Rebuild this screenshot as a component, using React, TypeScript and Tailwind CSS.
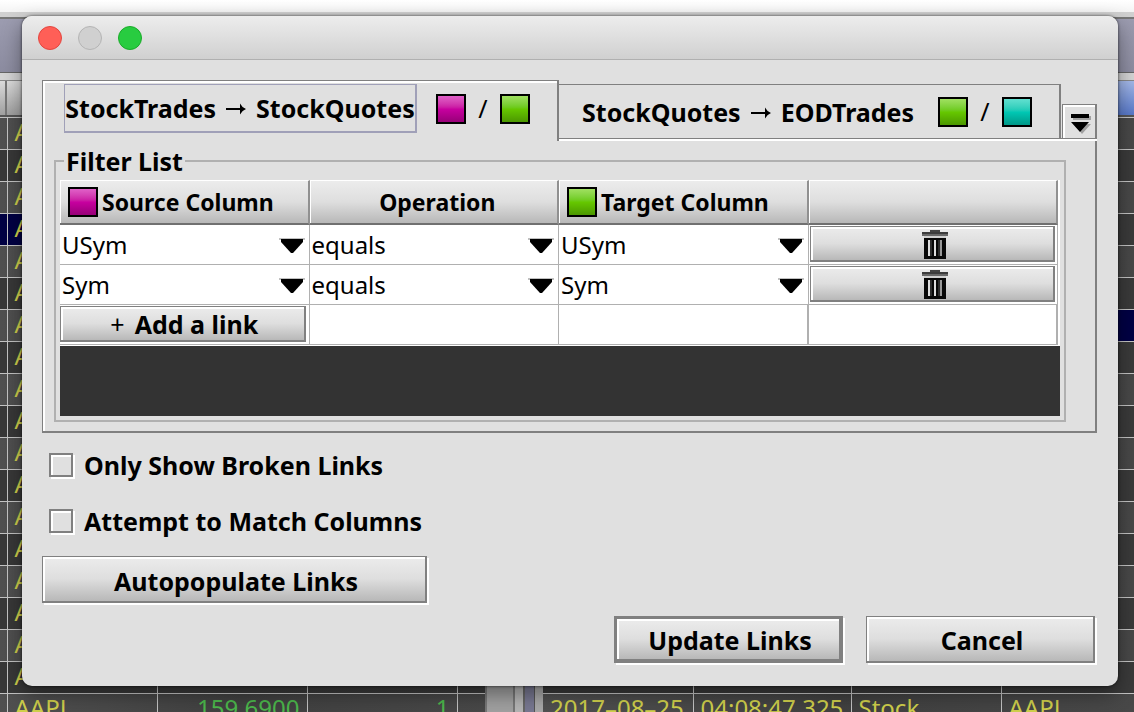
import { useState } from 'react';
import clsx from 'clsx';

const rows = Array.from({ length: 19 }, (_, index) => index);
const columns = ['USym', 'Sym'];

const raised =
  'border-t border-l border-r-2 border-b-2 border-[#808080] bg-linear-to-b from-[#ececec] via-[#dedede] to-[#b8b8b8] shadow-[inset_2px_2px_0_#fff,2px_2px_0_#fff] font-bold text-black';

const swatches = {
  magenta: 'from-[#e060c8] via-[#c800a0] to-[#980078]',
  green: 'from-[#a0e060] via-[#66c800] to-[#4c9800]',
  teal: 'from-[#60e0d0] via-[#00c8b4] to-[#009888]',
};

function Swatch({ color }: { color: keyof typeof swatches }) {
  return (
    <span
      className={clsx(
        'inline-block size-[30px] shrink-0 border-2 border-black bg-linear-to-b',
        swatches[color],
      )}
    />
  );
}

function Arrow() {
  return (
    <svg width="20" height="12" viewBox="0 0 20 12" className="shrink-0" aria-label="to">
      <path d="M0 6h16" stroke="#000" strokeWidth="2" />
      <path d="M14 0.5Q16 4.5 20 6Q16 7.5 14 11.5Z" />
    </svg>
  );
}

function TrashIcon() {
  return (
    <svg width="26" height="30" viewBox="0 0 26 30" shapeRendering="crispEdges">
      <path d="M8 0h10v2H8z" fill="#444" />
      <path d="M0 2h26v2H0z" fill="#3c3c3c" />
      <path d="M0 4h26v2H0z" fill="#686868" />
      <path d="M2 6h22v2H2z" fill="#d0d0d0" />
      <path d="M2 8h22v21H2z" fill="#080808" />
      <path d="M6 10h2v16H6zM12 10h2v16h-2z" fill="#ddd" />
      <path d="M18 10h2v16h-2z" fill="#999" />
      <path d="M8 10h2v16H8zM16 10h2v16h-2z" fill="#2c2c2c" />
    </svg>
  );
}

function CellSelect({
  label,
  value,
  options,
}: {
  label: string;
  value: string;
  options: string[];
}) {
  return (
    <div className="relative h-[39px]">
      <select
        aria-label={label}
        defaultValue={value}
        className="size-full appearance-none bg-white pl-[2px] text-[24px] leading-8 text-black"
      >
        {options.map((option) => (
          <option key={option}>{option}</option>
        ))}
      </select>
      <svg
        width="26"
        height="16"
        viewBox="0 0 26 16"
        className="pointer-events-none absolute top-[13px] right-1"
      >
        <path d="M0 0h26v2H0z" fill="#c0c0c0" />
        <path d="M2 1h22v3L14 15h-2L2 4z" />
      </svg>
    </div>
  );
}

function Check({ label }: { label: string }) {
  return (
    <label className="flex h-14 items-center gap-[11px] text-[25px] font-bold">
      <input
        type="checkbox"
        className="size-6 appearance-none border-2 border-[#808080] shadow-[inset_2px_2px_0_#fff,2px_2px_0_#fff] checked:bg-[#808080]"
      />
      <span className="pt-[2px]">{label}</span>
    </label>
  );
}

function Row({ index, cells, selected }: { index: number; cells: string[]; selected: number }) {
  return (
    <tr
      className={clsx(
        'h-8',
        index === selected
          ? 'bg-[#000044]'
          : index % 2
            ? 'bg-linear-to-r from-[#383838] to-[#3a3a3a]'
            : 'bg-linear-to-r from-[#505050] via-[#404040] to-[#484848]',
      )}
    >
      {cells.map((cell, i) => (
        <td
          key={i}
          className={clsx(
            'overflow-hidden border-t border-l border-[#c4c4c4] px-[7px] pt-0 pb-[3px] leading-7 whitespace-nowrap first:border-l-0',
            /^\d+(\.\d+)?$/.test(cell) ? 'text-right text-[#4cb84c]' : 'text-[#d0d04c]',
          )}
        >
          {cell}
        </td>
      ))}
    </tr>
  );
}

// Trade tables that show around the edges of the dialog
function Workspace() {
  return (
    <div className="absolute inset-0 flex flex-col overflow-hidden bg-[#404040] text-[24px]">
      <div className="h-3 shrink-0 bg-linear-to-b from-white to-[#f4f4f4]" />
      <div className="h-[7px] shrink-0 border-b-2 border-[#777] bg-[#d0d0d0]" />
      <div className="h-[54px] shrink-0 border-b border-[#666] bg-linear-to-b from-[#9c9cb0] to-[#8c8ca0]" />
      <div className="h-2 shrink-0 border-b border-[#888] bg-[#d4d4d4]" />
      <div className="flex h-9 shrink-0 border-b-2 border-[#555] bg-linear-to-b from-[#dcdcdc] to-[#a0a0a0]">
        <div className="w-[7px] border-r-2 border-[#777]" />
        <div className="ml-auto w-[133px] bg-linear-to-b from-[#a4b8e8] to-[#5878c8]" />
      </div>
      <div className="flex">
        <table className="w-[485px] shrink-0 table-fixed border-collapse">
          <colgroup>
            <col className="w-[7px]" />
            <col className="w-[150px]" />
            <col className="w-[150px]" />
            <col className="w-[150px]" />
            <col />
          </colgroup>
          <tbody>
            {rows.map((index) => (
              <Row
                key={index}
                index={index}
                selected={3}
                cells={index === 18 ? ['', 'AAPL', '159.6900', '1', ''] : ['', 'AAPL', '', '', '']}
              />
            ))}
          </tbody>
        </table>
        <div className="flex w-[58px] shrink-0">
          <div className="w-[30px] border-x-2 border-[#777] bg-[#a0a0a0]" />
          <div className="w-[10px] border-r-2 border-[#666] bg-[#b4b4b4]" />
          <div className="w-[10px] border-r border-[#555] bg-[#777790]" />
          <div className="w-2 bg-[#a8a8a8]" />
        </div>
        <table className="min-w-0 flex-1 table-fixed border-collapse">
          <colgroup>
            <col className="w-[150px]" />
            <col className="w-[158px]" />
            <col className="w-[150px]" />
            <col />
          </colgroup>
          <tbody>
            {rows.map((index) => (
              <Row
                key={index}
                index={index}
                selected={6}
                cells={
                  index === 18 ? ['2017–08–25', '04:08:47.325', 'Stock', 'AAPL'] : ['', '', '', '']
                }
              />
            ))}
          </tbody>
        </table>
      </div>
    </div>
  );
}

const headerCell =
  'h-[45px] border-t border-r-2 border-b-2 border-t-white border-r-[#909090] border-b-[#707070] bg-linear-to-b from-[#ececec] via-[#dedede] to-[#b8b8b8] p-0 text-[23px] leading-[30px] font-bold shadow-[inset_1px_0_0_#fff]';

export default function App() {
  const [links, setLinks] = useState(['USym', 'Sym']);

  return (
    <div className="relative min-h-screen font-['Noto_Sans','Open_Sans',sans-serif] text-black">
      <Workspace />
      <div className="relative pt-4 pr-4 pl-[22px]">
        <div
          role="dialog"
          aria-label="Links"
          className="overflow-hidden rounded-[10px] bg-[#e0e0e0] shadow-[0_0_3px_rgba(0,0,0,0.7),0_8px_20px_rgba(0,0,0,0.4)]"
        >
          <div className="flex h-11 items-center gap-4 border-b border-[#b0b0b0] bg-linear-to-b from-[#ededed] to-[#d0d0d0] px-4">
            <button aria-label="Close" className="size-6 rounded-full border border-[#e2463f] bg-[#ff5f57]" />
            <button aria-label="Minimize" className="size-6 rounded-full border border-[#b4b4b4] bg-[#d0d0d0]" />
            <button aria-label="Zoom" className="size-6 rounded-full border border-[#1aab29] bg-[#28cc40]" />
          </div>

          <div className="pt-5 pr-[21px] pb-[23px] pl-5">
            {/* Tabs */}
            <div className="flex items-end" role="tablist">
              <button
                role="tab"
                aria-selected="true"
                className="flex h-[61px] w-[517px] shrink-0 items-start border-t border-r-2 border-l border-[#808080] pt-[3px] pl-[21px] text-[25px] font-bold shadow-[inset_2px_2px_0_#fff]"
              >
                <span className="flex h-[49px] w-[353px] items-center justify-center gap-[10px] border-t border-r-2 border-b-2 border-l border-[#a0a0b8] pt-[2px]">
                  StockTrades <Arrow /> StockQuotes
                </span>
                <span className="flex h-[49px] items-center gap-3 pl-[19px] font-normal">
                  <Swatch color="magenta" />
                  <span className="w-[10px]">/</span>
                  <Swatch color="green" />
                </span>
              </button>
              <div className="flex h-[61px] min-w-0 flex-1 items-end border-b-2 border-white">
                <div className="flex h-[59px] flex-1 items-end border-b border-[#808080]">
                  <button
                    role="tab"
                    aria-selected="false"
                    className="flex h-[54px] w-[502px] items-center justify-between border-t border-r-2 border-[#808080] pr-[27px] pl-[23px] text-[25px] font-bold"
                  >
                    <span className="flex items-center gap-[10px] pt-[2px]">
                      StockQuotes <Arrow /> EODTrades
                    </span>
                    <span className="flex items-center gap-3 font-normal">
                      <Swatch color="green" />
                      <span className="w-[10px]">/</span>
                      <Swatch color="teal" />
                    </span>
                  </button>
                  <button
                    aria-label="More tabs"
                    className="ml-px flex h-[34px] flex-1 items-center justify-center border-t border-r-2 border-l border-[#808080] pt-1 pl-1 shadow-[inset_2px_2px_0_#fff]"
                  >
                    <svg width="20" height="20" viewBox="0 0 20 20">
                      <path d="M2 2h18v4H2zM3 10h17L11 20z" fill="#a0a0a0" />
                      <path d="M0 0h18v4H0zM0 8h18l-9 10z" />
                    </svg>
                  </button>
                </div>
              </div>
            </div>

            {/* Filter list */}
            <div className="border-r-2 border-b-2 border-l border-[#808080] pt-[6px] pr-[29px] pb-[9px] pl-[11px] shadow-[inset_2px_0_0_#fff]">
              <fieldset className="border-2 border-[#b0b0b0] px-1 pt-[5px] pb-1">
                <legend className="ml-1 px-[2px] text-[25px] leading-7 font-bold">Filter List</legend>
                <div className="bg-[#333] pb-[70px]">
                  <table className="w-full table-fixed border-separate border-spacing-0 border-r-2 border-b border-white bg-white">
                    <thead>
                      <tr>
                        <th className={headerCell}>
                          <span className="flex items-center gap-1 pl-2">
                            <Swatch color="magenta" />
                            Source Column
                          </span>
                        </th>
                        <th className={headerCell}>
                          <span className="pl-2">Operation</span>
                        </th>
                        <th className={headerCell}>
                          <span className="flex items-center gap-1 pl-2">
                            <Swatch color="green" />
                            Target Column
                          </span>
                        </th>
                        <th className={headerCell} aria-label="Remove" />
                      </tr>
                    </thead>
                    <tbody>
                      {links.map((link, index) => (
                        <tr key={link}>
                          <td className="border-r border-b border-[#b0b0b0] p-0">
                            <CellSelect label="Source column" value={link} options={columns} />
                          </td>
                          <td className="border-r border-b border-[#b0b0b0] p-0">
                            <CellSelect label="Operation" value="equals" options={['equals']} />
                          </td>
                          <td className="border-r border-b border-[#b0b0b0] p-0">
                            <CellSelect label="Target column" value={link} options={columns} />
                          </td>
                          <td className="border-r border-b border-[#b0b0b0] py-px pr-[2px] pl-px align-top">
                            <button
                              aria-label={`Delete link ${index + 1}`}
                              onClick={() => setLinks(links.filter((item) => item !== link))}
                              className={clsx(
                                raised,
                                'flex h-9 w-full items-center justify-center pt-[2px] pl-[7px]',
                              )}
                            >
                              <TrashIcon />
                            </button>
                          </td>
                        </tr>
                      ))}
                      <tr>
                        <td className="border-r border-b border-[#b0b0b0] py-px pr-[3px] pl-0 align-top">
                          <button
                            className={clsx(
                              raised,
                              'flex h-9 w-full items-center justify-center gap-[10px] pl-1 text-[25px] leading-8',
                            )}
                          >
                            <span className="font-normal">+</span>
                            <span>Add a link</span>
                          </button>
                        </td>
                        <td className="h-10 border-r border-b border-[#b0b0b0]" />
                        <td className="border-r-2 border-b border-[#b0b0b0]" />
                        <td className="border-r-2 border-b border-[#b0b0b0]" />
                      </tr>
                    </tbody>
                  </table>
                </div>
              </fieldset>
            </div>

            {/* Options */}
            <div className="flex flex-col items-start pt-1 pl-[7px]">
              <Check label="Only Show Broken Links" />
              <Check label="Attempt to Match Columns" />
            </div>
            <button className={clsx(raised, 'mt-[7px] h-[47px] w-[385px] pt-1 pl-1 text-[25px] leading-8')}>
              Autopopulate Links
            </button>

            <div className="mt-[13px] flex justify-end gap-[23px] pr-[2px]">
              <button className="h-[47px] w-[229px] border-t-3 border-r-4 border-b-4 border-l-3 border-[#808080] bg-linear-to-b from-[#ececec] via-[#dedede] to-[#b8b8b8] pt-[2px] pl-1 text-[25px] leading-8 font-bold shadow-[inset_2px_2px_0_#fff,2px_2px_0_#fff]">
                Update Links
              </button>
              <button className={clsx(raised, 'h-[47px] w-[229px] pt-[2px] pl-1 text-[25px] leading-8')}>
                Cancel
              </button>
            </div>
          </div>
        </div>
      </div>
    </div>
  );
}
